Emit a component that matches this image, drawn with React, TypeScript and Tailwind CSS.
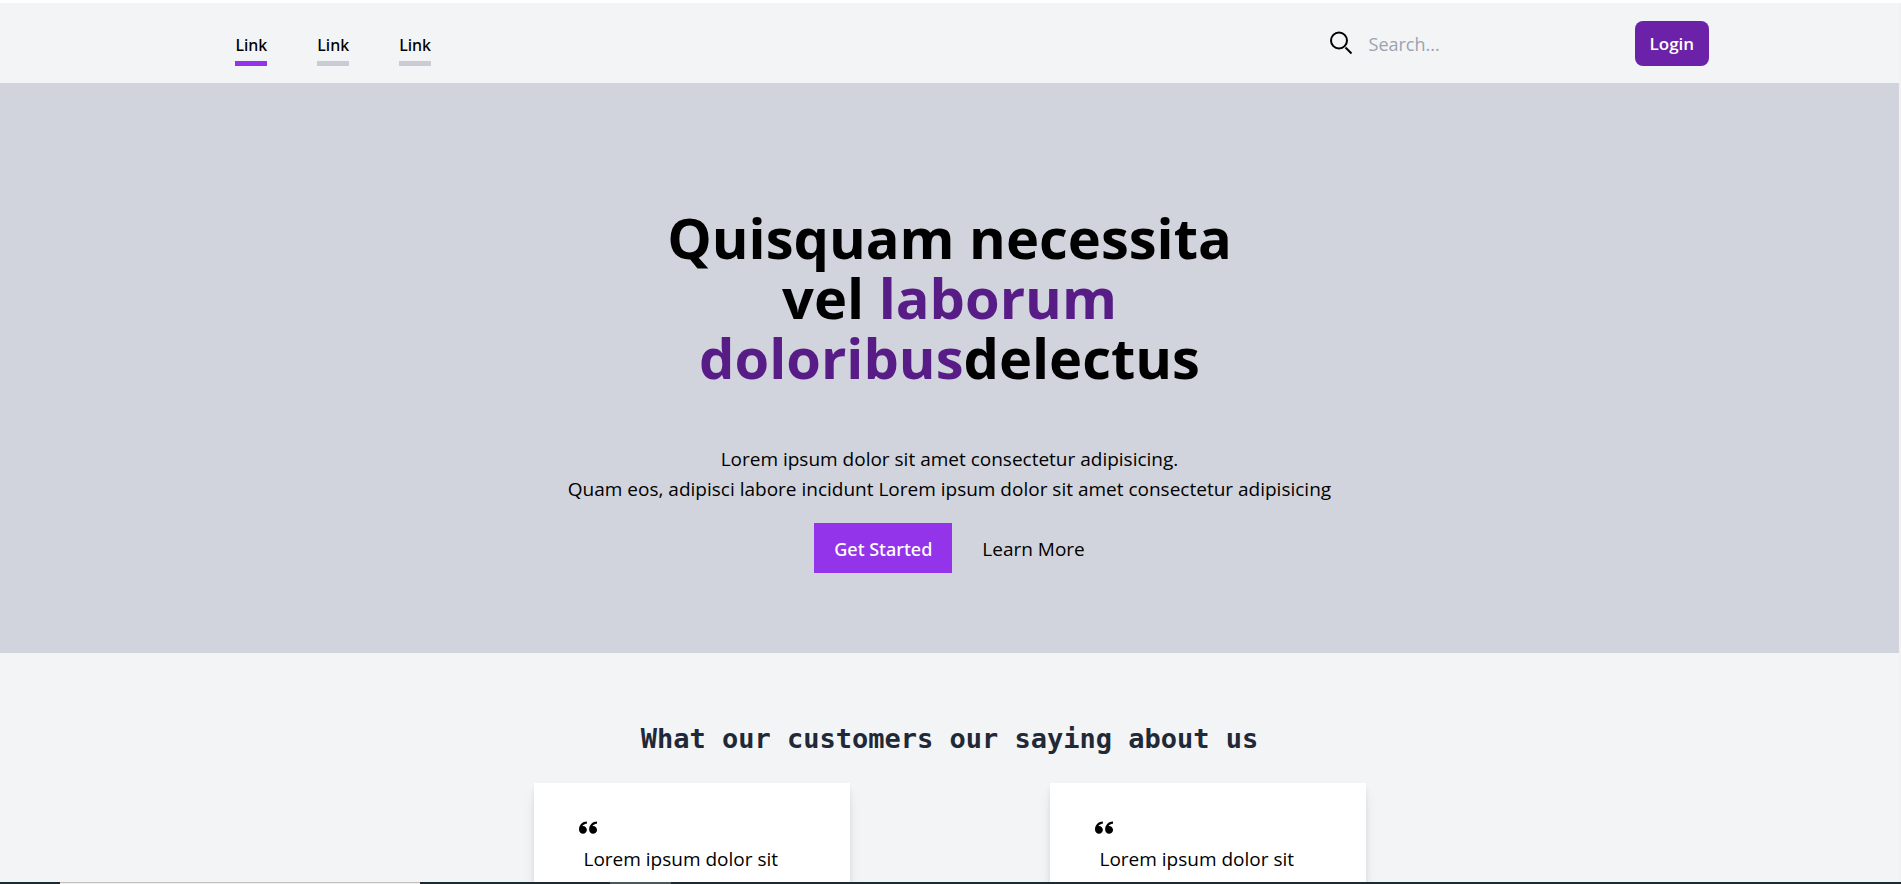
import { ImQuotesLeft } from "react-icons/im";

const links = [
  { id: 1, label: "Link", active: true },
  { id: 2, label: "Link", active: false },
  { id: 3, label: "Link", active: false },
];

const quotes = [
  { id: 1, text: "Lorem ipsum dolor sit" },
  { id: 2, text: "Lorem ipsum dolor sit" },
];

function SearchIcon() {
  return (
    <svg viewBox="0 0 24 24" className="size-6" fill="none" stroke="currentColor" strokeWidth="2" aria-hidden="true">
      <circle cx="10" cy="9.5" r="8" />
      <path d="M16.5 16.5 22.5 22.5" />
    </svg>
  );
}

function Header() {
  return (
    <header className="flex h-20 shrink-0 items-center bg-[#f3f4f6] pr-[10%] pl-[12.4%]">
      <nav className="flex gap-[50px] pt-3">
        {links.map((link) => (
          <a
            key={link.id}
            href="#"
            className={
              link.active
                ? "border-b-[5px] border-[#9333ea] pb-1 font-['Noto_Sans',sans-serif] text-[16px] leading-6 font-medium"
                : "border-b-[5px] border-[#cbcbd3] pb-1 font-['Noto_Sans',sans-serif] text-[16px] leading-6 font-medium"
            }
          >
            {link.label}
          </a>
        ))}
      </nav>
      <div className="ml-auto flex items-center gap-4">
        <label htmlFor="search" aria-label="Search">
          <SearchIcon />
        </label>
        <input
          id="search"
          type="text"
          placeholder="Search..."
          className="w-[250px] bg-transparent pt-0.5 text-[18px] leading-6 outline-none placeholder:text-[#9ca3af]"
        />
      </div>
      <button type="button" className="ml-4 h-[45px] rounded-lg bg-[#6b21a8] px-[15px] pt-0.5 text-[17px] font-semibold text-white">
        Login
      </button>
    </header>
  );
}

function Hero() {
  return (
    <section className="flex shrink-0 flex-col items-center bg-[#d1d4dc] pt-[124px] pb-20 text-center">
      <h1 className="max-w-[600px] text-[56px] leading-[60px] font-bold">
        Quisquam necessita vel <span className="text-[#581c87]">laborum doloribus</span>delectus
      </h1>
      <p className="mt-[57px] text-[19px] leading-[30px]">
        Lorem ipsum dolor sit amet consectetur adipisicing.
        <br />
        Quam eos, adipisci labore incidunt Lorem ipsum dolor sit amet consectetur adipisicing
      </p>
      <div className="mt-[19px] flex items-center gap-[30px]">
        <button type="button" className="h-[50px] bg-[#9333ea] px-5 pt-0.5 font-['Noto_Sans',sans-serif] text-[18px] font-medium text-white">
          Get Started
        </button>
        <a href="#" className="pt-0.5 text-[19px]">
          Learn More
        </a>
      </div>
    </section>
  );
}

function Testimonials() {
  return (
    <section className="flex min-h-0 flex-1 flex-col items-center pt-[66px]">
      <h2 className="font-['DejaVu_Sans_Mono',monospace] text-[27px] leading-10 font-bold text-[#1f2937]">
        What our customers our saying about us
      </h2>
      <div className="mt-6 flex min-h-0 flex-1 gap-[200px]">
        {quotes.map((quote) => (
          <article
            key={quote.id}
            className="w-[316px] bg-white px-[45px] pt-[35px] shadow-[0_4px_6px_-1px_rgba(0,0,0,0.1),0_10px_15px_-3px_rgba(0,0,0,0.1)]"
          >
            <ImQuotesLeft className="size-[18px]" />
            <p className="mt-2 pl-[5px] text-[19px] leading-[30px]">{quote.text}</p>
          </article>
        ))}
      </div>
    </section>
  );
}

export default function App() {
  return (
    <div className="flex h-screen flex-col overflow-hidden bg-white pt-[3px] font-['Open_Sans','Noto_Sans',sans-serif] text-black">
      <div className="flex min-h-0 flex-1 border-r-2 border-[#f1f1f1] bg-[#f3f4f6]">
        <main className="flex min-w-0 flex-1 flex-col overflow-hidden">
          <Header />
          <Hero />
          <Testimonials />
        </main>
      </div>
      <div className="flex h-0.5 shrink-0 bg-[#1c2b33]">
        <div className="ml-[60px] w-[360px] border-t border-[#bfbfbf] bg-[#f0f0f0]" />
        <div className="ml-[190px] w-[61px] bg-[#4d585c]" />
      </div>
    </div>
  );
}
